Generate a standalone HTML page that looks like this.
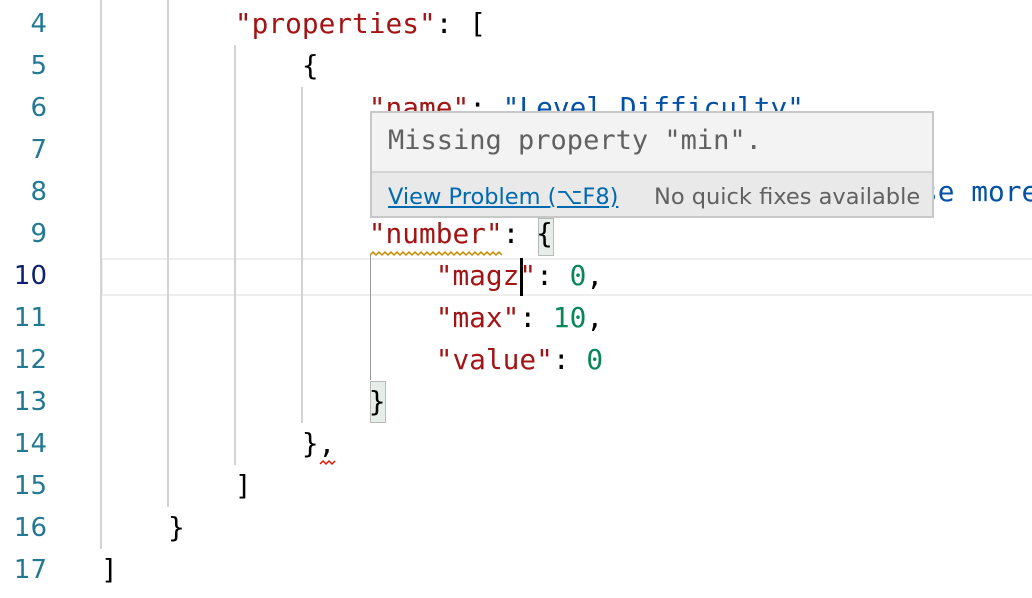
<!DOCTYPE html>
<html><head><style>
body{margin:0;width:1032px;height:598px;background:#fff;overflow:hidden;position:relative;font-family:"DejaVu Sans Mono","Liberation Mono",monospace}
.ln{position:absolute;left:0;width:47px;text-align:right;font-family:"DejaVu Sans","Liberation Sans",sans-serif;font-size:26px;color:#237893;height:42px;line-height:42px}
.c{position:absolute;left:101px;font-size:27.8px;white-space:pre;height:42px;line-height:42px;color:#000}
.k{color:#a31515}.s{color:#0451a5}.n{color:#098658}
.g{position:absolute;width:2px;background:#d3d3d3}
</style></head><body>
<div style="position:absolute;left:101px;top:258px;width:931px;height:38px;border:2px solid #eeeeee;border-right:none;box-sizing:border-box"></div>
<div class="g" style="left:100px;top:0;height:549px"></div>
<div class="g" style="left:167px;top:0;height:507px"></div>
<div class="g" style="left:234px;top:45px;height:420px"></div>
<div class="g" style="left:301px;top:87px;height:336px"></div>
<div class="g" style="left:370px;top:255px;height:125px;background:#999;width:1px"></div>
<div style="position:absolute;left:538px;top:218px;width:16px;height:38px;background:#e7ede8;border:1px solid #b9b9b9;box-sizing:border-box"></div>
<div style="position:absolute;left:370px;top:381px;width:16px;height:42px;background:#e7ede8;border:1px solid #b9b9b9;box-sizing:border-box"></div>
<div class="ln" style="top:3px">4</div><div class="ln" style="top:45px">5</div><div class="ln" style="top:87px">6</div><div class="ln" style="top:129px">7</div><div class="ln" style="top:171px">8</div><div class="ln" style="top:213px">9</div><div class="ln" style="top:255px;color:#0b216f">10</div><div class="ln" style="top:297px">11</div><div class="ln" style="top:339px">12</div><div class="ln" style="top:381px">13</div><div class="ln" style="top:423px">14</div><div class="ln" style="top:465px">15</div><div class="ln" style="top:507px">16</div><div class="ln" style="top:549px">17</div>
<div class="c" style="top:3px">        <span class="k">"properties"</span>: [</div>
<div class="c" style="top:45px">            {</div>
<div class="c" style="top:87px">                <span class="k">"name"</span>: <span class="s">"Level Difficulty"</span>,</div>
<div class="c" style="top:171px">                <span class="k">"description"</span>: <span class="s">"Enter a value to se more</span></div>
<div class="c" style="top:213px">                <span class="k">"number"</span>: {</div>
<div class="c" style="top:255px">                    <span class="k">"magz"</span>: <span class="n">0</span>,</div>
<div class="c" style="top:297px">                    <span class="k">"max"</span>: <span class="n">10</span>,</div>
<div class="c" style="top:339px">                    <span class="k">"value"</span>: <span class="n">0</span></div>
<div class="c" style="top:381px">                }</div>
<div class="c" style="top:423px">            },</div>
<div class="c" style="top:465px">        ]</div>
<div class="c" style="top:507px">    }</div>
<div class="c" style="top:549px">]</div>
<div style="position:absolute;left:520px;top:258px;width:3px;height:38px;background:#000"></div>
<svg style="position:absolute;left:370px;top:250px" width="136" height="8"><path d="M0 5 l3 -3 l3 3 l3 -3 l3 3 l3 -3 l3 3 l3 -3 l3 3 l3 -3 l3 3 l3 -3 l3 3 l3 -3 l3 3 l3 -3 l3 3 l3 -3 l3 3 l3 -3 l3 3 l3 -3 l3 3 l3 -3 l3 3 l3 -3 l3 3 l3 -3 l3 3 l3 -3 l3 3 l3 -3 l3 3 l3 -3 l3 3 l3 -3 l3 3 l3 -3 l3 3 l3 -3 l3 3 l3 -3 l3 3 l3 -3 l3 3" fill="none" stroke="#c98a00" stroke-width="1.5"/></svg>
<svg style="position:absolute;left:319px;top:458px" width="18" height="8"><path d="M1 6 l3 -3 l3 3 l3 -3 l3 3 l3 -3" fill="none" stroke="#e51400" stroke-width="1.5"/></svg>
<div style="position:absolute;left:370px;top:111px;width:564px;height:107px;border:2px solid #c8c8c8;box-sizing:border-box;background:#f3f3f3">
<div style="position:absolute;left:16px;top:10px;font-size:27px;color:#616161;white-space:pre;line-height:36px">Missing property "min".</div>
<div style="position:absolute;left:0;right:0;top:58px;bottom:0;background:#e9e9e9;border-top:2px solid #d4d4d4;font-family:'DejaVu Sans','Liberation Sans',sans-serif;font-size:22.5px;line-height:48px">
<span style="position:absolute;left:16px;color:#006ab1;text-decoration:underline;white-space:pre">View Problem (⌥F8)</span>
<span style="position:absolute;left:282px;color:#616161;white-space:pre">No quick fixes available</span></div>
</div>
</body></html>
